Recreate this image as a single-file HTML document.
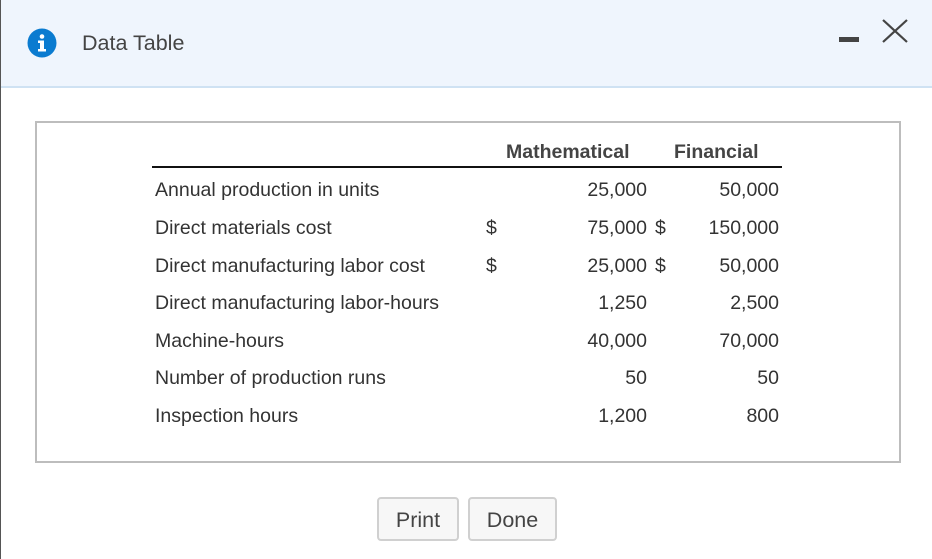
<!DOCTYPE html>
<html><head><meta charset="utf-8"><style>
body{margin:0;width:932px;height:559px;background:#fff;font-family:"Liberation Sans",Arial,sans-serif;color:#333;position:relative;overflow:hidden}
.hdr{position:absolute;left:0;top:0;width:932px;height:86px;background:#eff5fd;border-bottom:2px solid #cfe2f3}
.lb{position:absolute;left:0;top:0;width:1px;height:559px;background:#555}
.t{position:absolute;font-size:19.5px;line-height:20px;white-space:nowrap}
.r{text-align:right}
.box{position:absolute;left:35px;top:121px;width:862px;height:338px;border:2px solid #bdbdbd}
.btn{position:absolute;top:497px;height:44px;border:2px solid #d0d0d0;border-radius:4px;background:#f7f7f7;font-size:21.5px;line-height:42px;text-align:center;color:#444;box-sizing:border-box}
</style></head><body>
<div class="hdr"></div>
<div class="lb"></div>
<svg style="position:absolute;left:27px;top:28px" width="30" height="30" viewBox="0 0 30 30">
<circle cx="15" cy="15" r="14.5" fill="#0a7bd0"/>
<circle cx="15" cy="8.5" r="2.3" fill="#fff"/>
<path d="M11 12.5h6v8.5h2v2.5h-8v-2.5h2v-6h-2z" fill="#fff"/>
</svg>
<div class="t" style="left:82px;top:32px;font-size:21.5px;line-height:22px;color:#444">Data Table</div>
<div style="position:absolute;left:839px;top:37px;width:20px;height:5px;background:#444"></div>
<svg style="position:absolute;left:881px;top:19px" width="28" height="24" viewBox="0 0 28 24"><path d="M2 1L26 23M26 1L2 23" stroke="#444" stroke-width="2.2"/></svg>
<div class="box"></div>
<div class="t" style="left:506px;top:142px;font-weight:bold;color:#444">Mathematical</div>
<div class="t" style="left:674px;top:142px;font-weight:bold;color:#444">Financial</div>
<div style="position:absolute;left:152px;top:166px;width:630px;height:2px;background:#111"></div>

<div class="t" style="left:155px;top:180px">Annual production in units</div>
<div class="t" style="left:155px;top:218px">Direct materials cost</div>
<div class="t" style="left:155px;top:256px">Direct manufacturing labor cost</div>
<div class="t" style="left:155px;top:293px">Direct manufacturing labor-hours</div>
<div class="t" style="left:155px;top:331px">Machine-hours</div>
<div class="t" style="left:155px;top:368px">Number of production runs</div>
<div class="t" style="left:155px;top:406px">Inspection hours</div>

<div class="t" style="left:486px;top:218px">$</div>
<div class="t" style="left:486px;top:256px">$</div>
<div class="t" style="left:655px;top:218px">$</div>
<div class="t" style="left:655px;top:256px">$</div>

<div class="t r" style="left:547px;width:100px;top:180px">25,000</div>
<div class="t r" style="left:547px;width:100px;top:218px">75,000</div>
<div class="t r" style="left:547px;width:100px;top:256px">25,000</div>
<div class="t r" style="left:547px;width:100px;top:293px">1,250</div>
<div class="t r" style="left:547px;width:100px;top:331px">40,000</div>
<div class="t r" style="left:547px;width:100px;top:368px">50</div>
<div class="t r" style="left:547px;width:100px;top:406px">1,200</div>

<div class="t r" style="left:679px;width:100px;top:180px">50,000</div>
<div class="t r" style="left:679px;width:100px;top:218px">150,000</div>
<div class="t r" style="left:679px;width:100px;top:256px">50,000</div>
<div class="t r" style="left:679px;width:100px;top:293px">2,500</div>
<div class="t r" style="left:679px;width:100px;top:331px">70,000</div>
<div class="t r" style="left:679px;width:100px;top:368px">50</div>
<div class="t r" style="left:679px;width:100px;top:406px">800</div>

<div class="btn" style="left:377px;width:82px">Print</div>
<div class="btn" style="left:468px;width:89px">Done</div>
</body></html>
